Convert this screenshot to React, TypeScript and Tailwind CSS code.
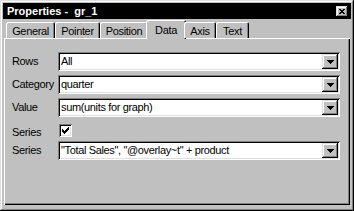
import React from 'react';

const raised =
  'shadow-[inset_-1px_-1px_0_#000,inset_1px_1px_0_#dfdfdf,inset_-2px_-2px_0_#808080,inset_2px_2px_0_#fff]';
const sunken =
  'shadow-[inset_1px_1px_0_#808080,inset_-1px_-1px_0_#fff,inset_2px_2px_0_#000,inset_-2px_-2px_0_#dfdfdf]';

const tabs = [
  { label: 'General', w: 'w-[49px]' },
  { label: 'Pointer', w: 'w-[45px]' },
  { label: 'Position', w: 'w-[48px]' },
  { label: 'Data', w: 'w-[40px]', active: true },
  { label: 'Axis', w: 'w-[32px]' },
  { label: 'Text', w: 'w-[33px]' },
];

const Arrow = () => (
  <svg width="7" height="4" viewBox="0 0 7 4" shapeRendering="crispEdges">
    <path d="M0 0h7v1H0zM1 1h5v1H1zM2 2h3v1H2zM3 3h1v1H3z" fill="#000" />
  </svg>
);

const Combo = ({ value }: { value: string }) => (
  <div className={`h-[19px] bg-white flex items-stretch p-[2px] ${sunken}`}>
    <div className="flex-1 flex items-center pl-[1px] text-[11px] text-black whitespace-pre overflow-hidden">
      {value}
    </div>
    <div className={`w-[16px] bg-[#c0c0c0] flex items-center justify-center ${raised}`}>
      <Arrow />
    </div>
  </div>
);

const Label = ({ children }: { children: React.ReactNode }) => (
  <div className="text-[11px] text-black flex items-center whitespace-nowrap">{children}</div>
);

export default function App() {
  return (
    <div
      className="w-[354px] h-[211px] bg-[#c0c0c0] p-[3px] flex flex-col tracking-[-0.35px] shadow-[inset_-1px_-1px_0_#000,inset_1px_1px_0_#dfdfdf,inset_-2px_-2px_0_#808080,inset_2px_2px_0_#fff]"
      style={{ fontFamily: '"Liberation Sans", Arial, sans-serif' }}
    >
      {/* title bar */}
      <div className="h-[16px] bg-black flex items-center justify-between pl-[4px] pr-[3px]">
        <span className="text-white font-bold text-[11px] tracking-[0px] whitespace-pre leading-none">Properties -  gr_1</span>
        <div className={`w-[12px] h-[11px] bg-[#c0c0c0] flex items-center justify-center ${raised}`}>
          <svg width="6" height="5" viewBox="0 0 6 5" shapeRendering="crispEdges">
            <path d="M0 0h2v1H0zM4 0h2v1H4zM1 1h4v1H1zM2 2h2v1H2zM1 3h4v1H1zM0 4h2v1H0zM4 4h2v1H4z" fill="#000" />
          </svg>
        </div>
      </div>

      <div className="mx-[1px] flex flex-col">
        {/* tabs */}
        <div className="h-[19px] flex items-end pl-[2px] relative z-10">
          {tabs.map((t) =>
            t.active ? (
              <div
                key={t.label}
                className={`${t.w} -mx-[2px] h-[19px] -mb-[1px] bg-[#c0c0c0] rounded-t-[2px] flex justify-center pt-[5px] text-[11px] leading-none text-black shadow-[inset_1px_1px_0_#fff,inset_-1px_0_0_#000,inset_-2px_0_0_#808080]`}
              >
                {t.label}
              </div>
            ) : (
              <div
                key={t.label}
                className={`${t.w} h-[16px] bg-[#c0c0c0] rounded-t-[2px] flex justify-center pt-[4px] text-[11px] text-black leading-none shadow-[inset_1px_1px_0_#fff,inset_-1px_0_0_#000,inset_-2px_0_0_#808080]`}
              >
                {t.label}
              </div>
            ),
          )}
        </div>

        {/* panel */}
        <div className="h-[167px] bg-[#c0c0c0] pt-[14px] pl-[8px] shadow-[inset_1px_1px_0_#fff,inset_-1px_-1px_0_#000,inset_-2px_-2px_0_#808080]">
          <div className="grid grid-cols-[46px_282px] gap-y-[4px]">
            <Label>Rows</Label>
            <Combo value="All" />
            <Label>Category</Label>
            <Combo value="quarter" />
            <Label>Value</Label>
            <Combo value="sum(units for graph)" />
            <div className="col-span-2 grid grid-cols-[47px_13px] mt-[3px] h-[13px]">
              <Label>Series</Label>
              <div className={`w-[13px] h-[13px] bg-white ${sunken} flex items-center justify-center`}>
                <svg width="7" height="7" viewBox="0 0 7 7" shapeRendering="crispEdges">
                  <path d="M6 0h1v1H6zM5 1h2v1H5zM0 2h1v1H0zM4 2h3v1H4zM0 3h2v1H0zM3 3h3v1H3zM0 4h5v1H0zM1 5h3v1H1zM2 6h1v1H2z" fill="#000" />
                </svg>
              </div>
            </div>
            <Label>Series</Label>
            <Combo value={'"Total Sales", "@overlay~t" + product'} />
          </div>
        </div>
      </div>
    </div>
  );
}
